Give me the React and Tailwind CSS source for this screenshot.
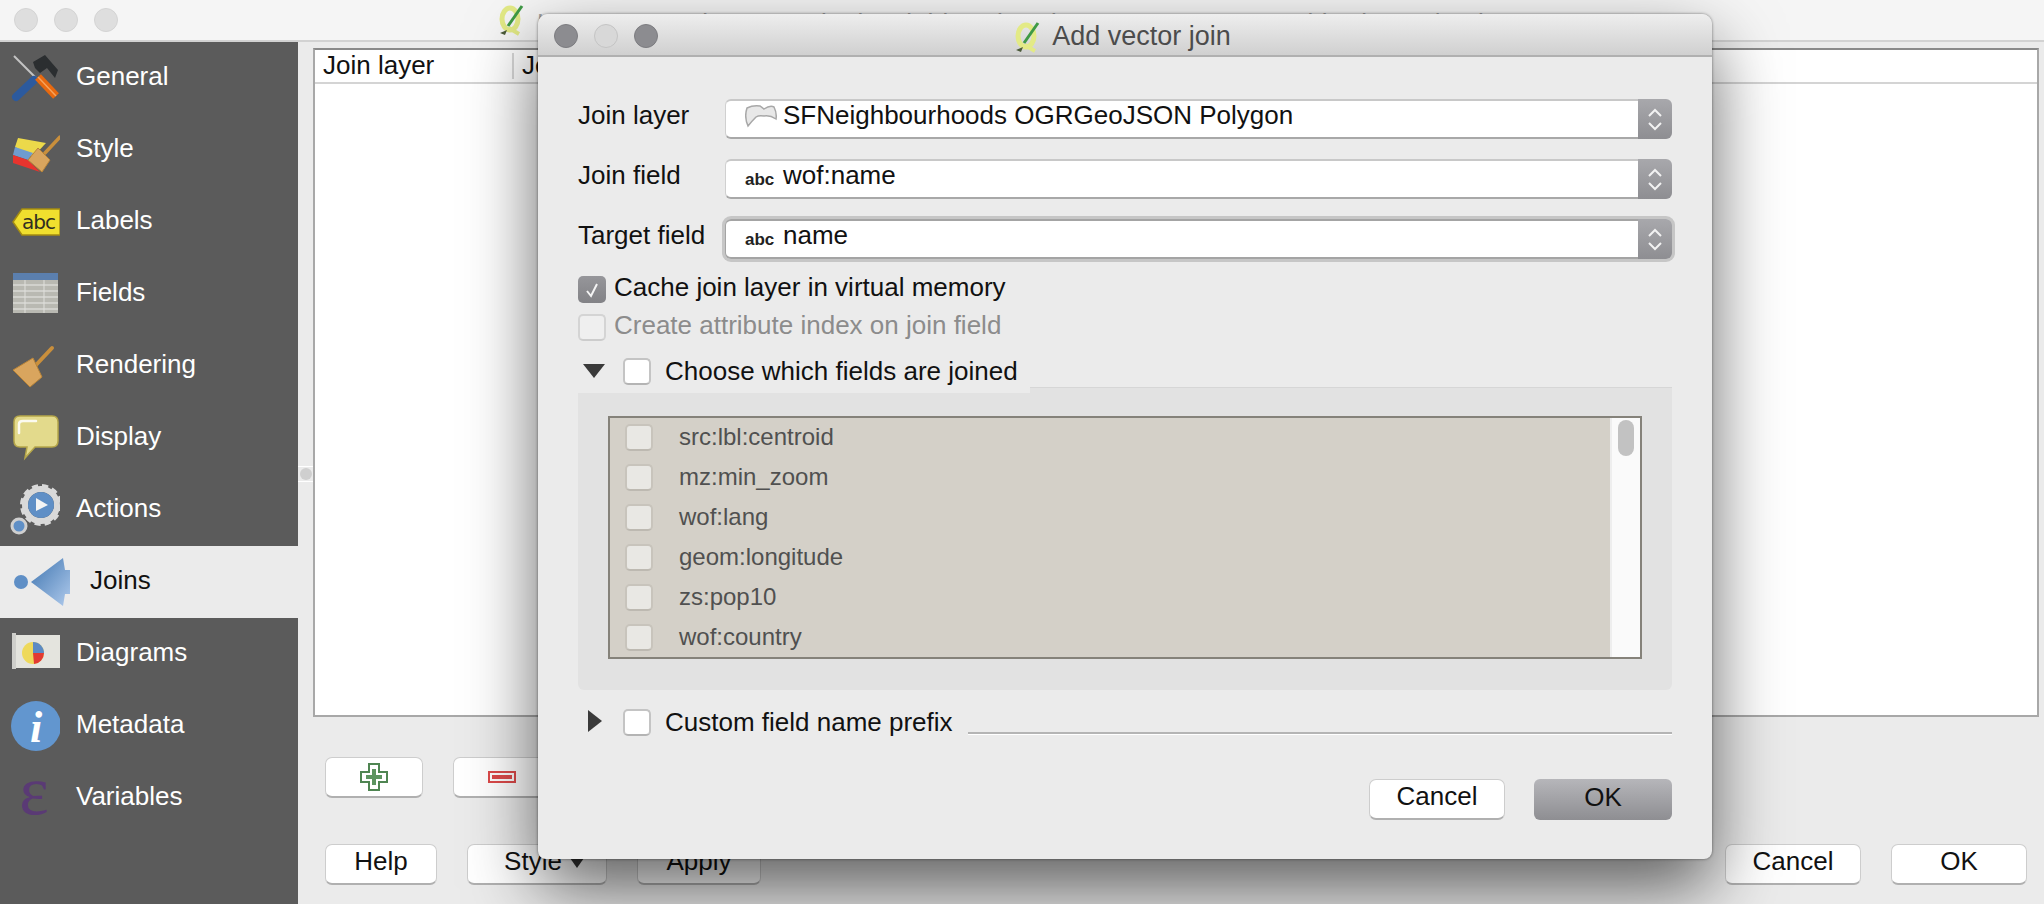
const sideItems = [
  { label: 'General', icon: GeneralIcon },
  { label: 'Style', icon: StyleIcon },
  { label: 'Labels', icon: LabelsIcon },
  { label: 'Fields', icon: FieldsIcon },
  { label: 'Rendering', icon: RenderingIcon },
  { label: 'Display', icon: DisplayIcon },
  { label: 'Actions', icon: ActionsIcon },
  { label: 'Joins', icon: JoinsIcon, active: true },
  { label: 'Diagrams', icon: DiagramsIcon },
  { label: 'Metadata', icon: MetadataIcon },
  { label: 'Variables', icon: VariablesIcon },
];

const joinFields = ['src:lbl:centroid', 'mz:min_zoom', 'wof:lang', 'geom:longitude', 'zs:pop10', 'wof:country'];

function IconBox({ children, wide }) {
  return (
    <svg width={wide ? 74 : 60} height="72" viewBox={wide ? '0 0 74 72' : '0 0 60 72'} className="shrink-0">
      {children}
    </svg>
  );
}

function GeneralIcon() {
  return (
    <IconBox>
      <line x1="14" y1="14" x2="38" y2="38" stroke="#c4c4c4" strokeWidth="2" />
      <line x1="16" y1="55" x2="34" y2="38" stroke="#2c5a9e" strokeWidth="8" strokeLinecap="round" />
      <path d="M33 20 L45 13 L58 28 L55 36 L47 26 L40 31 L35 26 Z" fill="#2b2e30" />
      <line x1="38" y1="35" x2="56" y2="54" stroke="#e8690f" strokeWidth="8" />
      <line x1="38" y1="35" x2="56" y2="54" stroke="#f6a35c" strokeWidth="1.5" />
    </IconBox>
  );
}

function StyleIcon() {
  return (
    <IconBox>
      <polygon points="18,24 46,29 33,43 15,33" fill="#ecd94a" />
      <polygon points="15,33 33,39 28,46 13,41" fill="#6f9ccf" />
      <polygon points="13,41 28,46 40,58 13,49" fill="#e8342e" />
      <line x1="60" y1="23" x2="45" y2="39" stroke="#c98f3c" strokeWidth="3.5" strokeLinecap="round" />
      <polygon points="38,34 50,46 42,58 28,46" fill="#d9a55e" stroke="#b98438" />
    </IconBox>
  );
}

function LabelsIcon() {
  return (
    <IconBox>
      <polygon points="13,36 22,23 60,23 60,49 22,49" fill="#f0df2e" stroke="#a48c12" strokeWidth="1.5" />
      <text x="22" y="43" fontSize="20" fill="#2f2f22" fontFamily="'DejaVu Sans', sans-serif" textLength="34">abc</text>
    </IconBox>
  );
}

function FieldsIcon() {
  return (
    <IconBox>
      <rect x="13" y="15" width="45" height="40" fill="#b9b9b2" />
      <rect x="13" y="15" width="45" height="7" fill="#5b7fae" />
      {[27, 33, 39, 45, 51].map((y) => (
        <line key={y} x1="13" y1={y} x2="58" y2={y} stroke="#dadad5" strokeWidth="1.5" />
      ))}
      <line x1="25" y1="22" x2="25" y2="55" stroke="#e0e0dc" />
      <line x1="44" y1="22" x2="44" y2="55" stroke="#e0e0dc" />
    </IconBox>
  );
}

function RenderingIcon() {
  return (
    <IconBox>
      <line x1="52" y1="18" x2="36" y2="35" stroke="#c98f3c" strokeWidth="4" strokeLinecap="round" />
      <polygon points="33,28 42,47 30,57 13,40" fill="#d9a55e" stroke="#b98438" />
    </IconBox>
  );
}

function DisplayIcon() {
  return (
    <IconBox>
      <path d="M20 14 H52 Q58 14 58 20 V39 Q58 45 52 45 H35 L25 56 L27 45 H20 Q14 45 14 39 V20 Q14 14 20 14 Z" fill="#e3da8c" stroke="#b5a64a" strokeWidth="1.5" />
      <path d="M19 31 V22 Q19 19 23 19 H36" fill="none" stroke="#fbfaf0" strokeWidth="2.5" strokeLinecap="round" />
    </IconBox>
  );
}

function ActionsIcon() {
  return (
    <IconBox>
      <circle cx="41" cy="31" r="16" fill="none" stroke="#d9d9d9" strokeWidth="6" />
      <circle cx="41" cy="31" r="19" fill="none" stroke="#d9d9d9" strokeWidth="4" strokeDasharray="6 4" />
      <circle cx="41" cy="31" r="13" fill="#5f8fc6" />
      <polygon points="36,24 36,37 48,31" fill="#f4f4f4" />
      <circle cx="19" cy="52" r="7" fill="#5f8fc6" stroke="#cfcfcf" strokeWidth="3" />
    </IconBox>
  );
}

function JoinsIcon() {
  return (
    <IconBox wide>
      <defs>
        <linearGradient id="joinArrow" x1="0" y1="0" x2="1" y2="1">
          <stop offset="0" stopColor="#3f75b0" />
          <stop offset="1" stopColor="#afcaec" />
        </linearGradient>
      </defs>
      <circle cx="21" cy="36" r="7" fill="#5f8fc6" />
      <polygon points="31,36 63,12 65,24 70,24 70,48 65,48 63,60" fill="url(#joinArrow)" />
    </IconBox>
  );
}

function DiagramsIcon() {
  return (
    <IconBox>
      <rect x="12" y="17" width="50" height="33" fill="#e4e4de" />
      <rect x="12" y="15" width="4" height="36" fill="#cfcfcb" />
      <circle cx="33" cy="35" r="11" fill="#eed95a" />
      <path d="M33 35 V24 A11 11 0 0 1 44 35 Z" fill="#5c8ac4" />
      <path d="M33 35 H44 A11 11 0 0 1 34 46 Z" fill="#e23a32" />
    </IconBox>
  );
}

function MetadataIcon() {
  return (
    <IconBox>
      <circle cx="36" cy="36" r="25" fill="#6296cf" />
      <text x="36" y="52" textAnchor="middle" fontSize="44" fontWeight="700" fontStyle="italic" fill="#ffffff" fontFamily="'Liberation Serif', serif">i</text>
    </IconBox>
  );
}

function VariablesIcon() {
  return (
    <IconBox>
      <text x="34" y="52" textAnchor="middle" fontSize="70" fill="#5a3a75" fontFamily="'Liberation Serif', serif">ε</text>
    </IconBox>
  );
}

function QgisIcon() {
  return (
    <svg width="26" height="32" viewBox="0 0 26 32" className="shrink-0">
      <ellipse cx="11" cy="15" rx="8" ry="11" fill="none" stroke="#e3ea86" strokeWidth="5" />
      <path d="M10 24 L20 30" stroke="#e3ea86" strokeWidth="4" />
      <line x1="23" y1="2" x2="9" y2="22" stroke="#3f9a45" strokeWidth="3" />
      <path d="M1 29 L8 26 L6 31 Z" fill="#4b5a3a" />
    </svg>
  );
}

function SideItem({ label, icon: Icon, active }) {
  return (
    <div className={`flex h-[72px] items-center ${active ? 'bg-[#ebebeb] text-[#111]' : 'text-white'}`}>
      <Icon />
      <span className="ml-[16px] pb-[4px]">{label}</span>
    </div>
  );
}

function Button({ children, className = '' }) {
  return (
    <div className={`flex h-[41px] items-center justify-center rounded-[7px] border border-[#cdcdcd] border-b-2 border-b-[#b0b0b0] bg-white pb-[6px] text-[#111] ${className}`}>
      {children}
    </div>
  );
}

function Check({ checked, disabled, dim }) {
  if (checked) {
    return (
      <div className="flex h-[27px] w-[28px] shrink-0 items-center justify-center rounded-[5px] bg-gradient-to-b from-[#96969a] to-[#828286]">
        <svg width="18" height="18" viewBox="0 0 18 18">
          <path d="M4 10 L8 15 L14 3" fill="none" stroke="#f4f4f4" strokeWidth="2" />
        </svg>
      </div>
    );
  }
  let tone = 'border-[#c4c4c4] border-b-[#b4b4b4] bg-white';
  if (disabled) tone = 'border-[#d4d4d4] border-b-[#cccccc] bg-[#efefef]';
  if (dim) tone = 'border-[#c8c4bc] border-b-[#bdb9b1] bg-[#e9e8e4]';
  return <div className={`h-[27px] w-[28px] shrink-0 rounded-[5px] border-2 ${tone}`} />;
}

function Stepper() {
  return (
    <div className="flex h-full w-[34px] shrink-0 flex-col items-center justify-center gap-[3px] rounded-r-[6px] bg-gradient-to-b from-[#a8a8ac] to-[#8e8e92]">
      <svg width="16" height="10" viewBox="0 0 16 10">
        <path d="M2 8 L8 2 L14 8" fill="none" stroke="#f2f2f2" strokeWidth="2" />
      </svg>
      <svg width="16" height="10" viewBox="0 0 16 10">
        <path d="M2 2 L8 8 L14 2" fill="none" stroke="#f2f2f2" strokeWidth="2" />
      </svg>
    </div>
  );
}

function Combo({ icon, text, focused }) {
  return (
    <div className={`flex h-[40px] flex-1 items-center rounded-[6px] ${focused ? 'shadow-[0_0_0_3px_#c6c6c6]' : ''}`}>
      <div className={`flex h-full flex-1 items-center rounded-l-[6px] border-t-2 border-b-2 border-l bg-white pl-[19px] text-[#111] ${focused ? 'border-t-[#a4a4a4] border-b-[#a4a4a4] border-l-[#a4a4a4]' : 'border-t-[#c8c8c8] border-b-[#a8a8a8] border-l-[#d0d0d0]'}`}>
        <span className="flex w-[38px] shrink-0 items-center">{icon}</span>
        <span className="pb-[8px]">{text}</span>
      </div>
      <Stepper />
    </div>
  );
}

const abcIcon = <span className="text-[17px] font-bold leading-none text-[#222]">abc</span>;

const polygonIcon = (
  <svg width="32" height="24" viewBox="0 0 32 24" className="mb-[4px]">
    <path d="M2 3 Q8 0 15 1 L19 4 Q25 0 29 2 Q32 8 31 14 Q25 10 19 11 Q14 10 11 12 Q7 16 3 21 Q-1 12 2 3 Z" fill="#e8e8e8" stroke="#a8a8a8" strokeWidth="1.5" />
  </svg>
);

function Triangle({ open }) {
  return (
    <svg width="22" height="24" viewBox="0 0 22 24" className="shrink-0">
      <polygon points={open ? '0,6 22,6 11,20' : '5,1 19,12 5,23'} fill="#3a3a3a" />
    </svg>
  );
}

export default function App() {
  return (
    <div className="relative flex h-[904px] w-[2044px] flex-col overflow-hidden bg-[#ebebeb] font-['Liberation_Sans',Arial,sans-serif] text-[26px] leading-[32px]">
      {/* main window title */}
      <div className="flex h-[42px] shrink-0 items-center border-b-2 border-[#d2d2d2] bg-[#f5f5f5]">
        <div className="ml-[14px] flex gap-[16px]">
          <div className="h-[24px] w-[24px] rounded-full border border-[#d4d4d4] bg-[#dedede]" />
          <div className="h-[24px] w-[24px] rounded-full border border-[#d4d4d4] bg-[#dedede]" />
          <div className="h-[24px] w-[24px] rounded-full border border-[#d4d4d4] bg-[#dedede]" />
        </div>
        <div className="ml-[381px]">
          <QgisIcon />
        </div>
        <span className="ml-[12px] whitespace-nowrap pt-[5px] tracking-[0.6px] text-[#a4a4a4]">Layer Properties - SF Final Neighbourhoods OGRGeoJSON MultiPolygon | Joins</span>
      </div>

      <div className="flex flex-1">
        <div className="flex w-[298px] shrink-0 flex-col bg-[#5b5b5b]">
          {sideItems.map((item) => (
            <SideItem key={item.label} {...item} />
          ))}
        </div>

        <div className="flex min-w-0 flex-1 flex-col pl-[15px] pr-[5px] pt-[6px]">
          <div className="h-[669px] border-2 border-[#a8a8a8] border-t-[#8a8a8a] bg-white">
            <div className="flex h-[34px] border-b-2 border-[#d4d4d4] text-[#111]">
              <div className="flex w-[197px] items-center pb-[3px] pl-[8px]">
                <span>Join layer</span>
              </div>
              <div className="my-[3px] w-[2px] bg-[#d8d8d8]" />
              <div className="flex items-center pb-[3px] pl-[8px]">
                <span>Join field</span>
              </div>
            </div>
          </div>

          <div className="ml-[12px] mt-[40px] flex gap-[30px]">
            <Button className="w-[98px]">
              <svg width="28" height="28" viewBox="0 0 28 28" className="mt-[6px]">
                <path d="M9 1 H19 V9 H27 V19 H19 V27 H9 V19 H1 V9 H9 Z" fill="#fff" stroke="#4f8552" strokeWidth="2" />
                <path d="M14 6 V22 M6 14 H22" stroke="#5d9460" strokeWidth="4" />
              </svg>
            </Button>
            <Button className="w-[98px]">
              <svg width="28" height="12" viewBox="0 0 28 12" className="mt-[6px]">
                <rect x="1" y="1" width="26" height="10" fill="#fff" stroke="#dd4a4a" strokeWidth="2" />
                <rect x="4" y="4" width="20" height="4" fill="#dd4a4a" />
              </svg>
            </Button>
          </div>

          <div className="mx-[12px] mt-[46px] flex justify-between">
            <div className="flex gap-[30px]">
              <Button className="w-[112px]">Help</Button>
              <Button className="w-[140px] pl-[14px]">
                <span>Style</span>
                <svg width="14" height="10" viewBox="0 0 14 10" className="ml-[8px] mt-[4px]">
                  <polygon points="0,0 14,0 7,10" fill="#333" />
                </svg>
              </Button>
              <Button className="w-[124px]">Apply</Button>
            </div>
            <div className="flex gap-[30px]">
              <Button className="w-[136px]">Cancel</Button>
              <Button className="w-[136px]">OK</Button>
            </div>
          </div>
        </div>
      </div>

      {/* splitter handle */}
      <div className="absolute left-[298px] top-[466px] flex h-[16px] w-[15px] items-center justify-center border-y border-white">
        <div className="h-[12px] w-[12px] rounded-full bg-[#cfcfcf]" />
      </div>

      {/* Add vector join dialog */}
      <div className="absolute left-[538px] top-[14px] flex h-[845px] w-[1174px] flex-col rounded-b-[8px] rounded-t-[10px] bg-[#ebebeb] shadow-[0_30px_70px_rgba(0,0,0,0.6),0_0_3px_rgba(0,0,0,0.5)]">
        <div className="relative flex h-[43px] shrink-0 items-center justify-center rounded-t-[10px] border-b-2 border-[#b0b0b0] bg-gradient-to-b from-[#eeeeee] to-[#d0d0d0] pr-[4px] pt-[4px]">
          <div className="absolute left-[16px] top-[10px] flex gap-[16px]">
            <div className="h-[24px] w-[24px] rounded-full border border-[#7c7c80] bg-[#8c8c90]" />
            <div className="h-[24px] w-[24px] rounded-full border border-[#c4c4c4] bg-[#d8d8d8]" />
            <div className="h-[24px] w-[24px] rounded-full border border-[#7c7c80] bg-[#8c8c90]" />
          </div>
          <QgisIcon />
          <span className="ml-[11px] pb-[2px] text-[27px] text-[#4c4c4c]">Add vector join</span>
        </div>

        <div className="flex flex-1 flex-col px-[40px] pt-[42px] text-[#111]">
          <div className="flex flex-col gap-[20px]">
            <div className="flex items-center">
              <span className="w-[147px] pb-[8px]">Join layer</span>
              <Combo icon={polygonIcon} text="SFNeighbourhoods OGRGeoJSON Polygon" />
            </div>
            <div className="flex items-center">
              <span className="w-[147px] pb-[8px]">Join field</span>
              <Combo icon={abcIcon} text="wof:name" />
            </div>
            <div className="flex items-center">
              <span className="w-[147px] pb-[8px]">Target field</span>
              <Combo icon={abcIcon} text="name" focused />
            </div>
          </div>

          <div className="mt-[17px] flex h-[27px] items-center gap-[8px]">
            <Check checked />
            <span className="pb-[5px]">Cache join layer in virtual memory</span>
          </div>
          <div className="mt-[11px] flex h-[27px] items-center gap-[8px]">
            <Check disabled />
            <span className="pb-[5px] text-[#8c8c8c]">Create attribute index on join field</span>
          </div>

          <div className="mt-[17px] flex h-[29px] items-start">
            <div className="ml-[5px] mr-[18px] w-[22px]">
              <Triangle open />
            </div>
            <Check />
            <span className="ml-[14px] leading-[27px]">Choose which fields are joined</span>
          </div>

          <div className="relative h-[303px] shrink-0 rounded-b-[6px] border-t border-[#d6d6d6] bg-[#e2e2e2] pl-[30px] pt-[28px]">
            <div className="absolute left-0 top-[-1px] h-[6px] w-[452px] bg-[#ebebeb]" />
            <div className="flex h-[243px] w-[1034px] border-2 border-[#85827a]">
              <div className="flex flex-1 flex-col gap-[13px] bg-[#d4d0c8] pl-[15px] pt-[6px]">
                {joinFields.map((name) => (
                  <div key={name} className="flex h-[27px] items-center gap-[26px] text-[24px] text-[#505050]">
                    <Check dim />
                    <span className="pb-[2px]">{name}</span>
                  </div>
                ))}
              </div>
              <div className="w-[30px] shrink-0 border-l-2 border-[#eeeeee] bg-[#fafafa] pl-[6px] pt-[2px]">
                <div className="h-[36px] w-[16px] rounded-full bg-[#c2c2c2]" />
              </div>
            </div>
          </div>

          <div className="mt-[19px] flex h-[27px] items-start">
            <div className="ml-[5px] mr-[18px] w-[22px]">
              <Triangle />
            </div>
            <Check />
            <span className="ml-[14px] whitespace-nowrap leading-[27px]">Custom field name prefix</span>
            <div className="ml-[15px] mt-[23px] h-[3px] flex-1 border-b border-t-2 border-b-white border-t-[#b4b4b4]" />
          </div>

          <div className="mt-[43px] flex justify-end gap-[29px]">
            <Button className="w-[136px]">Cancel</Button>
            <div className="flex h-[41px] w-[138px] items-center justify-center rounded-[6px] bg-gradient-to-b from-[#b6b6ba] to-[#8e8e92] pb-[6px]">OK</div>
          </div>
        </div>
      </div>
    </div>
  );
}
